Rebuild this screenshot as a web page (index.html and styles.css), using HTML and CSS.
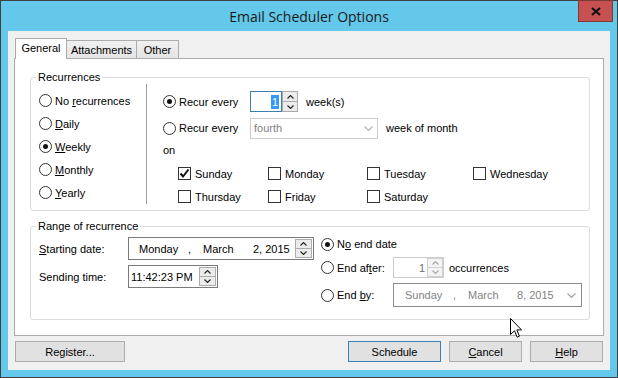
FILE: index.html
```html
<!DOCTYPE html>
<html>
<head>
<meta charset="utf-8">
<title>Email Scheduler Options</title>
<link rel="stylesheet" href="styles.css">
</head>
<body>
<div class="window">
  <div class="titlebar">
    <div class="title">Email Scheduler Options</div>
    <div class="close">
      <svg width="10" height="9" viewBox="0 0 10 9"><path d="M1 1 L9 8 M9 1 L1 8" stroke="#111" stroke-width="2.2" fill="none"/></svg>
    </div>
  </div>
  <div class="client">
    <div class="tabs">
      <div class="tab active t-general">General</div>
      <div class="tab t-attach">Attachments</div>
      <div class="tab t-other">Other</div>
    </div>
    <div class="panel">
      <div class="group recur">
        <span class="legend">Recurrences</span>
        <div class="recur-left">
          <div class="opt"><span class="radio"></span><span>No <u>r</u>ecurrences</span></div>
          <div class="opt"><span class="radio"></span><span><u>D</u>aily</span></div>
          <div class="opt"><span class="radio on"></span><span><u>W</u>eekly</span></div>
          <div class="opt"><span class="radio"></span><span><u>M</u>onthly</span></div>
          <div class="opt"><span class="radio"></span><span><u>Y</u>early</span></div>
        </div>
        <div class="vdiv"></div>
        <div class="recur-right">
          <div class="row row-every">
            <div class="opt opt-w87"><span class="radio on"></span><span>Recur every</span></div>
            <div class="wspin">
              <div class="wtext"><span class="sel">1</span></div>
              <div class="spinbtns">
                <div class="sb"><svg width="7" height="4" viewBox="0 0 7 4"><polyline points="0.5,3.5 3.5,0.5 6.5,3.5" fill="none" stroke="#222" stroke-width="1.1"/></svg></div>
                <div class="sb"><svg width="7" height="4" viewBox="0 0 7 4"><polyline points="0.5,0.5 3.5,3.5 6.5,0.5" fill="none" stroke="#222" stroke-width="1.1"/></svg></div>
              </div>
            </div>
            <span class="after-ctl">week(s)</span>
          </div>
          <div class="row row-month">
            <div class="opt opt-w87"><span class="radio"></span><span>Recur every</span></div>
            <div class="combo disabled">
              <span>fourth</span>
              <svg width="9" height="5" viewBox="0 0 9 5"><polyline points="0.5,0.5 4.5,4.5 8.5,0.5" fill="none" stroke="#b0b0b0" stroke-width="1.1"/></svg>
            </div>
            <span class="after-ctl">week of month</span>
          </div>
          <div class="on-label">on</div>
          <div class="days">
            <div class="day"><span class="check on"><svg width="11" height="11" viewBox="0 0 11 11"><polyline points="1.5,5.5 4,8.5 9.5,1.5" fill="none" stroke="#111" stroke-width="2"/></svg></span><span>Sunday</span></div>
            <div class="day"><span class="check"></span><span>Monday</span></div>
            <div class="day"><span class="check"></span><span>Tuesday</span></div>
            <div class="day"><span class="check"></span><span>Wednesday</span></div>
            <div class="day"><span class="check"></span><span>Thursday</span></div>
            <div class="day"><span class="check"></span><span>Friday</span></div>
            <div class="day"><span class="check"></span><span>Saturday</span></div>
          </div>
        </div>
      </div>

      <div class="group range">
        <span class="legend">Range of recurrence</span>
        <div class="range-left">
          <div class="frow frow-date">
            <span class="flabel"><u>S</u>tarting date:</span>
            <div class="datebox start">
              <span class="f-day">Monday</span><span class="f-comma">,</span><span class="f-month">March</span><span class="f-rest">2, 2015</span>
              <div class="spinbtns inbox">
                <div class="sb"><svg width="7" height="4" viewBox="0 0 7 4"><polyline points="0.5,3.5 3.5,0.5 6.5,3.5" fill="none" stroke="#222" stroke-width="1.1"/></svg></div>
                <div class="sb"><svg width="7" height="4" viewBox="0 0 7 4"><polyline points="0.5,0.5 3.5,3.5 6.5,0.5" fill="none" stroke="#222" stroke-width="1.1"/></svg></div>
              </div>
            </div>
          </div>
          <div class="frow frow-time">
            <span class="flabel">Sending time:</span>
            <div class="timebox">
              <span class="ttext">11:42:23 PM</span>
              <div class="spinbtns inbox">
                <div class="sb"><svg width="7" height="4" viewBox="0 0 7 4"><polyline points="0.5,3.5 3.5,0.5 6.5,3.5" fill="none" stroke="#222" stroke-width="1.1"/></svg></div>
                <div class="sb"><svg width="7" height="4" viewBox="0 0 7 4"><polyline points="0.5,0.5 3.5,3.5 6.5,0.5" fill="none" stroke="#222" stroke-width="1.1"/></svg></div>
              </div>
            </div>
          </div>
        </div>
        <div class="range-right">
          <div class="rrow rrow1">
            <div class="opt"><span class="radio on"></span><span>N<u>o</u> end date</span></div>
          </div>
          <div class="rrow rrow2">
            <div class="opt opt-w72"><span class="radio"></span><span>End af<u>t</u>er:</span></div>
            <div class="numbox disabled">
              <span class="ntext">1</span>
              <div class="spinbtns inbox light">
                <div class="sb"><svg width="7" height="4" viewBox="0 0 7 4"><polyline points="0.5,3.5 3.5,0.5 6.5,3.5" fill="none" stroke="#a8a8a8" stroke-width="1.1"/></svg></div>
                <div class="sb"><svg width="7" height="4" viewBox="0 0 7 4"><polyline points="0.5,0.5 3.5,3.5 6.5,0.5" fill="none" stroke="#a8a8a8" stroke-width="1.1"/></svg></div>
              </div>
            </div>
            <span class="after-occ">occurrences</span>
          </div>
          <div class="rrow rrow3">
            <div class="opt opt-w72"><span class="radio"></span><span>End <u>b</u>y:</span></div>
            <div class="datebox endby disabled">
              <span class="f-day">Sunday</span><span class="f-comma">,</span><span class="f-month">March</span><span class="f-rest">8, 2015</span>
              <svg class="dd" width="9" height="5" viewBox="0 0 9 5"><polyline points="0.5,0.5 4.5,4.5 8.5,0.5" fill="none" stroke="#a0a0a0" stroke-width="1.1"/></svg>
            </div>
          </div>
        </div>
      </div>
    </div>

    <div class="buttons">
      <div class="btn b-register">Register...</div>
      <div class="spacer"></div>
      <div class="btn b-schedule default">Schedule</div>
      <div class="btn b-cancel"><span><u>C</u>ancel</span></div>
      <div class="btn b-help"><span><u>H</u>elp</span></div>
    </div>
  </div>
  <svg class="cursor" width="13" height="21" viewBox="0 0 13 21"><path d="M0.5 0.5 L0.5 16.5 L4.5 12.8 L7.2 19.2 L9.4 18.2 L6.8 11.9 L11.5 11.9 Z" fill="#fff" stroke="#000" stroke-width="1"/></svg>
</div>
</body>
</html>
```

FILE: styles.css
```css
* { box-sizing: border-box; }
html, body { margin: 0; padding: 0; }
body {
  width: 618px;
  height: 378px;
  overflow: hidden;
  font-family: "Liberation Sans", Arial, sans-serif;
  font-size: 11px;
  color: #000;
  background: #63c8e9;
}
u { text-decoration-thickness: 1px; text-underline-offset: 1px; }

.window {
  position: relative;
  width: 618px;
  height: 378px;
  border: 1px solid #404040;
  background: #63c8e9;
  display: flex;
  flex-direction: column;
}

.titlebar {
  position: relative;
  height: 30px;
  flex: none;
  display: flex;
  align-items: center;
  justify-content: center;
}
.title {
  font-family: "Open Sans", "Noto Sans", sans-serif;
  font-size: 14px;
  color: #1a1a1a;
  margin-top: 1px;
}
.close {
  position: absolute;
  top: -1px;
  right: 4px;
  width: 35px;
  height: 22px;
  background: #c75050;
  border: 1px solid #7e3a36;
  display: flex;
  align-items: center;
  justify-content: center;
}

.client {
  flex: 1;
  margin: 0 7px 7px 7px;
  background: #f0f0f0;
  display: flex;
  flex-direction: column;
}

/* tabs */
.tabs {
  position: relative;
  z-index: 1;
  display: flex;
  align-items: flex-end;
  height: 20px;
  margin: 7px 0 0 7px;
}
.tab {
  height: 18px;
  border: 1px solid #acacac;
  border-bottom: none;
  background: linear-gradient(#f0f0f0, #e5e5e5);
  display: flex;
  align-items: center;
  justify-content: center;
  margin-left: -1px;
}
.tab.active {
  height: 21px;
  margin-bottom: -1px;
  margin-left: 0;
  background: #fff;
  padding-bottom: 2px;
}
.t-general { width: 52px; }
.t-attach { width: 71px; }
.t-other { width: 43px; }

.panel {
  margin: 0 0 0 6px;
  width: 590px;
  height: 278px;
  background: #fff;
  border: 1px solid #acacac;
  padding: 18px 13px 0 15px;
}

.group {
  position: relative;
  border: 1px solid #dcdcdc;
  border-radius: 3px;
  display: flex;
}
.legend {
  position: absolute;
  top: -7px;
  left: 5px;
  padding: 0 2px;
  background: #fff;
  line-height: 13px;
}

.recur { height: 134px; }
.range { height: 94px; margin-top: 15px; }

.opt {
  display: flex;
  align-items: center;
  gap: 3px;
  height: 23px;
  white-space: nowrap;
}
.opt-w87 { width: 87px; height: 21px; }
.opt-w72 { width: 72px; height: 100%; }

.radio {
  width: 13px;
  height: 13px;
  border: 1px solid #333;
  border-radius: 50%;
  background: #fff;
  display: flex;
  align-items: center;
  justify-content: center;
  flex: none;
}
.radio.on::after {
  content: "";
  width: 5px;
  height: 5px;
  border-radius: 50%;
  background: #111;
}
.check {
  width: 13px;
  height: 13px;
  border: 1px solid #333;
  background: #fff;
  flex: none;
  display: flex;
  align-items: center;
  justify-content: center;
}

.recur-left {
  width: 115px;
  padding: 11px 0 0 8px;
}
.vdiv {
  width: 1px;
  background: #a0a0a0;
  margin: 6px 0;
}
.recur-right {
  flex: 1;
  padding: 13px 0 0 16px;
}
.row {
  display: flex;
  align-items: center;
}
.row-every { height: 21px; }
.row-month { height: 22px; margin-top: 5px; }
.after-ctl { margin-left: 8px; }

.wspin { display: flex; height: 21px; }
.wtext {
  width: 32px;
  height: 21px;
  border: 1px solid #3c7fb1;
  background: #fff;
  display: flex;
  align-items: center;
  justify-content: flex-end;
  padding-right: 2px;
}
.sel {
  background: #3399ff;
  color: #fff;
  padding: 0 1px;
  line-height: 14px;
}
.spinbtns {
  width: 16px;
  display: flex;
  flex-direction: column;
  border: 1px solid #acacac;
  background: #acacac;
  gap: 1px;
}
.wspin .spinbtns { height: 21px; }
.sb {
  flex: 1;
  background: #ececec;
  display: flex;
  align-items: center;
  justify-content: center;
}
.spinbtns.light { border-color: #d0d0d0; background: #d0d0d0; }
.spinbtns.light .sb { background: #f4f4f4; }

.combo {
  width: 128px;
  height: 21px;
  border: 1px solid #cccccc;
  background: #fff;
  display: flex;
  align-items: center;
  justify-content: space-between;
  padding: 0 4px 0 3px;
  color: #838383;
}

.on-label {
  margin-top: 5px;
  height: 13px;
  line-height: 13px;
}
.days {
  margin-top: 5px;
  padding-left: 15px;
  display: grid;
  grid-template-columns: 90px 99px 106px auto;
  grid-auto-rows: 23px;
}
.day {
  display: flex;
  align-items: center;
  gap: 4px;
}

/* range */
.range-left {
  padding: 10px 0 0 8px;
}
.frow {
  display: flex;
  align-items: center;
}
.frow-date { height: 23px; }
.frow-time { height: 23px; margin-top: 5px; }
.flabel { width: 89px; }

.datebox {
  height: 23px;
  border: 1px solid #7a7a7a;
  background: #fff;
  display: flex;
  align-items: center;
  padding-left: 10px;
  position: relative;
}
.datebox.start { width: 186px; }
.f-day { width: 49px; }
.f-comma { width: 15px; }
.f-month { width: 50px; }
.f-rest { flex: 1; }
.spinbtns.inbox { height: 19px; width: 17px; margin-right: 1px; }

.timebox {
  width: 90px;
  height: 23px;
  border: 1px solid #7a7a7a;
  background: #fff;
  display: flex;
  align-items: center;
  padding-left: 2px;
}
.ttext { flex: 1; }

.range-right {
  margin-left: 7px;
  padding-top: 7px;
}
.rrow { display: flex; align-items: center; }
.rrow1 { height: 20px; }
.rrow1 .opt { height: 20px; }
.rrow2 { height: 21px; margin-top: 3px; }
.rrow3 { height: 24px; margin-top: 5px; }

.numbox {
  width: 51px;
  height: 21px;
  border: 1px solid #cccccc;
  background: #fff;
  display: flex;
  align-items: center;
  color: #6d6d6d;
}
.ntext { flex: 1; text-align: right; padding-right: 2px; }
.numbox .spinbtns.inbox { height: 19px; width: 16px; margin-right: 0; }
.after-occ { margin-left: 5px; }

.datebox.endby {
  width: 189px;
  height: 24px;
  border-color: #8c8c8c;
  color: #838383;
  padding-left: 11px;
}
.datebox.endby .f-day { width: 48px; }
.datebox.endby .f-month { width: 49px; }
.dd { margin-right: 5px; }

/* buttons */
.buttons {
  display: flex;
  margin: 5px 7px 0 7px;
  height: 21px;
  gap: 8px;
}
.spacer { flex: 1; }
.btn {
  height: 21px;
  border: 1px solid #adadad;
  background: #e1e1e1;
  display: flex;
  align-items: center;
  justify-content: center;
}
.btn.default { border-color: #3c7fb1; }
.b-register { width: 110px; }
.b-schedule { width: 93px; }
.b-cancel { width: 73px; }
.b-help { width: 73px; }

.cursor {
  position: absolute;
  left: 509px;
  top: 317px;
}
```
